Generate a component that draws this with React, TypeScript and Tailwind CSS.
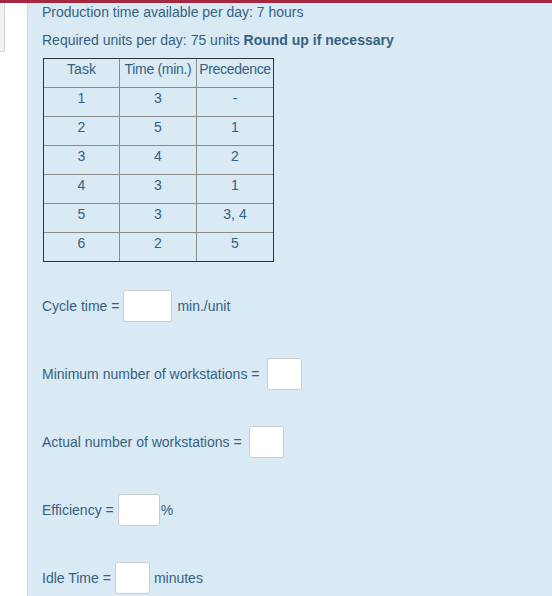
import React from "react";

const rows = [
  ["1", "3", "-"],
  ["2", "5", "1"],
  ["3", "4", "2"],
  ["4", "3", "1"],
  ["5", "3", "3, 4"],
  ["6", "2", "5"],
];

function Box({ w }: { w: string }) {
  return <div className={`h-[32px] ${w} bg-white border border-[#c9ced3] rounded-[3px] shrink-0`} />;
}

export default function App() {
  return (
    <div
      className="w-[552px] h-[596px] overflow-hidden bg-white text-[14px] leading-[16px] text-[#35617f]"
      style={{ fontFamily: '"Liberation Sans", Arial, sans-serif' }}
    >
      <div className="h-[3px] bg-[#a5283f]" />
      <div className="flex">
        <div className="w-[27px] shrink-0">
          <div className="w-[5px] h-[49px] bg-[#eef0f2] border-r border-b border-[#d6d8da]" />
        </div>
        <div className="flex-1 h-[593px] bg-[#d9eaf5] border-l border-[#c6dae7] pl-[14px] pt-[1px]">
          <p>Production time available per day: 7 hours</p>
          <p className="mt-[12px]">
            Required units per day: 75 units <span className="font-bold">Round up if necessary</span>
          </p>
          <div className="mt-[10px] ml-[1px] w-[231px] border border-[#333]">
            <div className="flex h-[28px]">
              <div className="w-[75px] text-center pt-[2px]">Task</div>
              <div className="w-[77px] border-l border-[#8c8c8c] text-center pt-[2px] whitespace-nowrap tracking-[-0.3px]">Time (min.)</div>
              <div className="w-[77px] border-l border-[#8c8c8c] text-center pt-[2px] whitespace-nowrap tracking-[-0.3px]">Precedence</div>
            </div>
            {rows.map((r, i) => (
              <div key={i} className="flex h-[29px] border-t border-[#8c8c8c]">
                <div className="w-[75px] text-center pt-[2px]">{r[0]}</div>
                <div className="w-[77px] border-l border-[#8c8c8c] text-center pt-[2px]">{r[1]}</div>
                <div className="w-[77px] border-l border-[#8c8c8c] text-center pt-[2px]">{r[2]}</div>
              </div>
            ))}
          </div>
          <div className="mt-[28px] flex flex-col gap-[36px]">
            <div className="flex items-center h-[32px]">
              <span>Cycle time =</span>
              <div className="ml-[4px]"><Box w="w-[49px]" /></div>
              <span className="ml-[5px]">min./unit</span>
            </div>
            <div className="flex items-center h-[32px]">
              <span>Minimum number of workstations =</span>
              <div className="ml-[8px]"><Box w="w-[35px]" /></div>
            </div>
            <div className="flex items-center h-[32px]">
              <span>Actual number of workstations =</span>
              <div className="ml-[7px]"><Box w="w-[35px]" /></div>
            </div>
            <div className="flex items-center h-[32px]">
              <span>Efficiency =</span>
              <div className="ml-[4px]"><Box w="w-[42px]" /></div>
              <span className="ml-[1px]">%</span>
            </div>
            <div className="flex items-center h-[32px]">
              <span>Idle Time =</span>
              <div className="ml-[4px]"><Box w="w-[35px]" /></div>
              <span className="ml-[4px]">minutes</span>
            </div>
          </div>
        </div>
      </div>
    </div>
  );
}
